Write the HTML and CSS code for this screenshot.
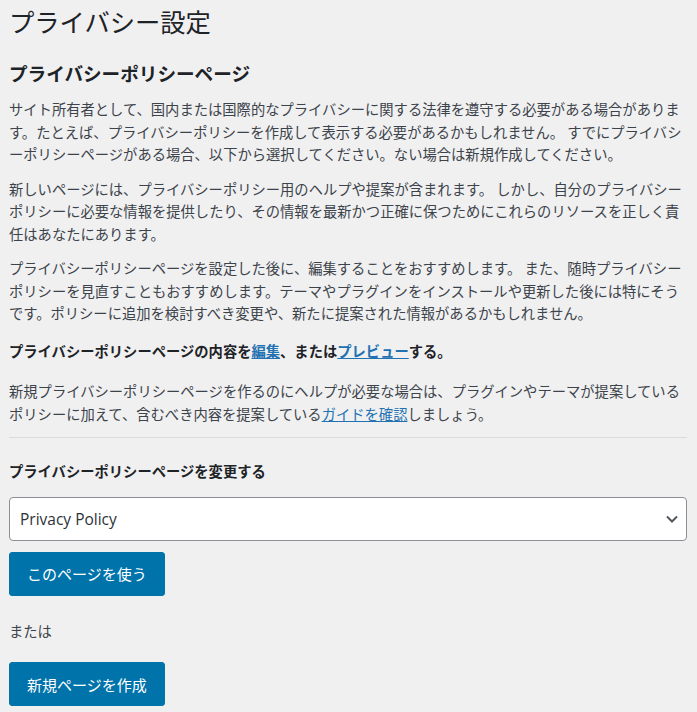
FILE: index.html
```html
<!DOCTYPE html>
<html lang="ja">
  <head>
    <meta charset="UTF-8" />
    <meta name="viewport" content="width=device-width, initial-scale=1.0" />
    <title>プライバシー設定</title>
    <link rel="stylesheet" href="styles.css">
  </head>
  <body>
    <div class="wrap">
      <h1>プライバシー設定</h1>
      <h2>プライバシーポリシーページ</h2>

      <p>
        サイト所有者として、国内または国際的なプライバシーに関する法律を遵守する必要がある場合があります。たとえば、プライバシーポリシーを作成して表示する必要があるかもしれません。 すでにプライバシーポリシーページがある場合、以下から選択してください。ない場合は新規作成してください。
      </p>
      <p>
        新しいページには、プライバシーポリシー用のヘルプや提案が含まれます。 しかし、自分のプライバシーポリシーに必要な情報を提供したり、その情報を最新かつ正確に保つためにこれらのリソースを正しく責任はあなたにあります。
      </p>
      <p>
        プライバシーポリシーページを設定した後に、編集することをおすすめします。 また、随時プライバシーポリシーを見直すこともおすすめします。テーマやプラグインをインストールや更新した後には特にそうです。ポリシーに追加を検討すべき変更や、新たに提案された情報があるかもしれません。
      </p>
      <p class="edit-line">
        <strong>プライバシーポリシーページの内容を<a href="#">編集</a>、または<a href="#">プレビュー</a>する。</strong>
      </p>
      <p>
        新規プライバシーポリシーページを作るのにヘルプが必要な場合は、プラグインやテーマが提案しているポリシーに加えて、含むべき内容を提案している<a href="#">ガイドを確認</a>しましょう。
      </p>

      <hr />

      <form class="page-form">
        <h3><label for="page_for_privacy_policy">プライバシーポリシーページを変更する</label></h3>
        <div class="select-wrap">
          <select id="page_for_privacy_policy" name="page_for_privacy_policy">
            <option value="3" selected>Privacy Policy</option>
          </select>
          <svg class="chevron" width="14" height="14" viewBox="0 0 14 14" aria-hidden="true">
            <path d="M2 4.5l5 5 5-5" fill="none" stroke="#50575e" stroke-width="2" />
          </svg>
        </div>
        <button type="button" class="button-primary">このページを使う</button>
      </form>

      <p class="or">または</p>

      <form class="page-form">
        <button type="button" class="button-primary">新規ページを作成</button>
      </form>
    </div>
  </body>
</html>
```

FILE: styles.css
```css
body {
  margin: 0;
  background-color: #f0f0f1;
  color: #3c434a;
  font-family: "Noto Sans CJK JP", "Noto Sans", sans-serif;
  font-size: 14.3px;
}
.wrap {
  width: 678px;
  padding: 5px 0 0 9px;
}
h1 {
  margin: 0;
  font-size: 25.3px;
  font-weight: 400;
  line-height: 33px;
  color: #1d2327;
}
h2 {
  margin: 22px 0 0;
  font-size: 18.6px;
  font-weight: 700;
  line-height: 26px;
  color: #1d2327;
}
p {
  margin: 12px 0 0;
  line-height: 22.5px;
}
.edit-line {
  margin-top: 15px;
}
.edit-line strong {
  color: #1d2327;
}
.edit-line + p {
  margin-top: 18px;
}
a {
  color: #2271b1;
  text-decoration: underline;
}
hr {
  margin: 12px 0 0;
  border: 0;
  border-top: 1px solid #dcdcde;
  height: 0;
}
h3 {
  margin: 22px 0 0;
  font-size: 14.3px;
  font-weight: 700;
  line-height: 22.5px;
  color: #1d2327;
}
.page-form {
  margin: 0;
}
.select-wrap {
  position: relative;
  margin-top: 14px;
}
select {
  display: block;
  width: 100%;
  height: 44px;
  padding: 0 30px 0 10px;
  border: 1px solid #8c8f94;
  border-radius: 4px;
  background: #fff;
  color: #2c3338;
  font-family: "Open Sans", "Noto Sans", sans-serif;
  font-size: 15.5px;
  -webkit-appearance: none;
  appearance: none;
  box-sizing: border-box;
}
.chevron {
  position: absolute;
  right: 8px;
  top: 15px;
  pointer-events: none;
}
.button-primary {
  display: block;
  margin-top: 11px;
  height: 44px;
  padding: 0 17px;
  border: 1px solid #0073aa;
  border-radius: 3px;
  background: #0073aa;
  color: #fff;
  font-family: "Noto Sans CJK JP", sans-serif;
  font-size: 15px;
  cursor: pointer;
}
.or {
  margin-top: 24px;
}
.or + .page-form .button-primary {
  margin-top: 20px;
}
```
